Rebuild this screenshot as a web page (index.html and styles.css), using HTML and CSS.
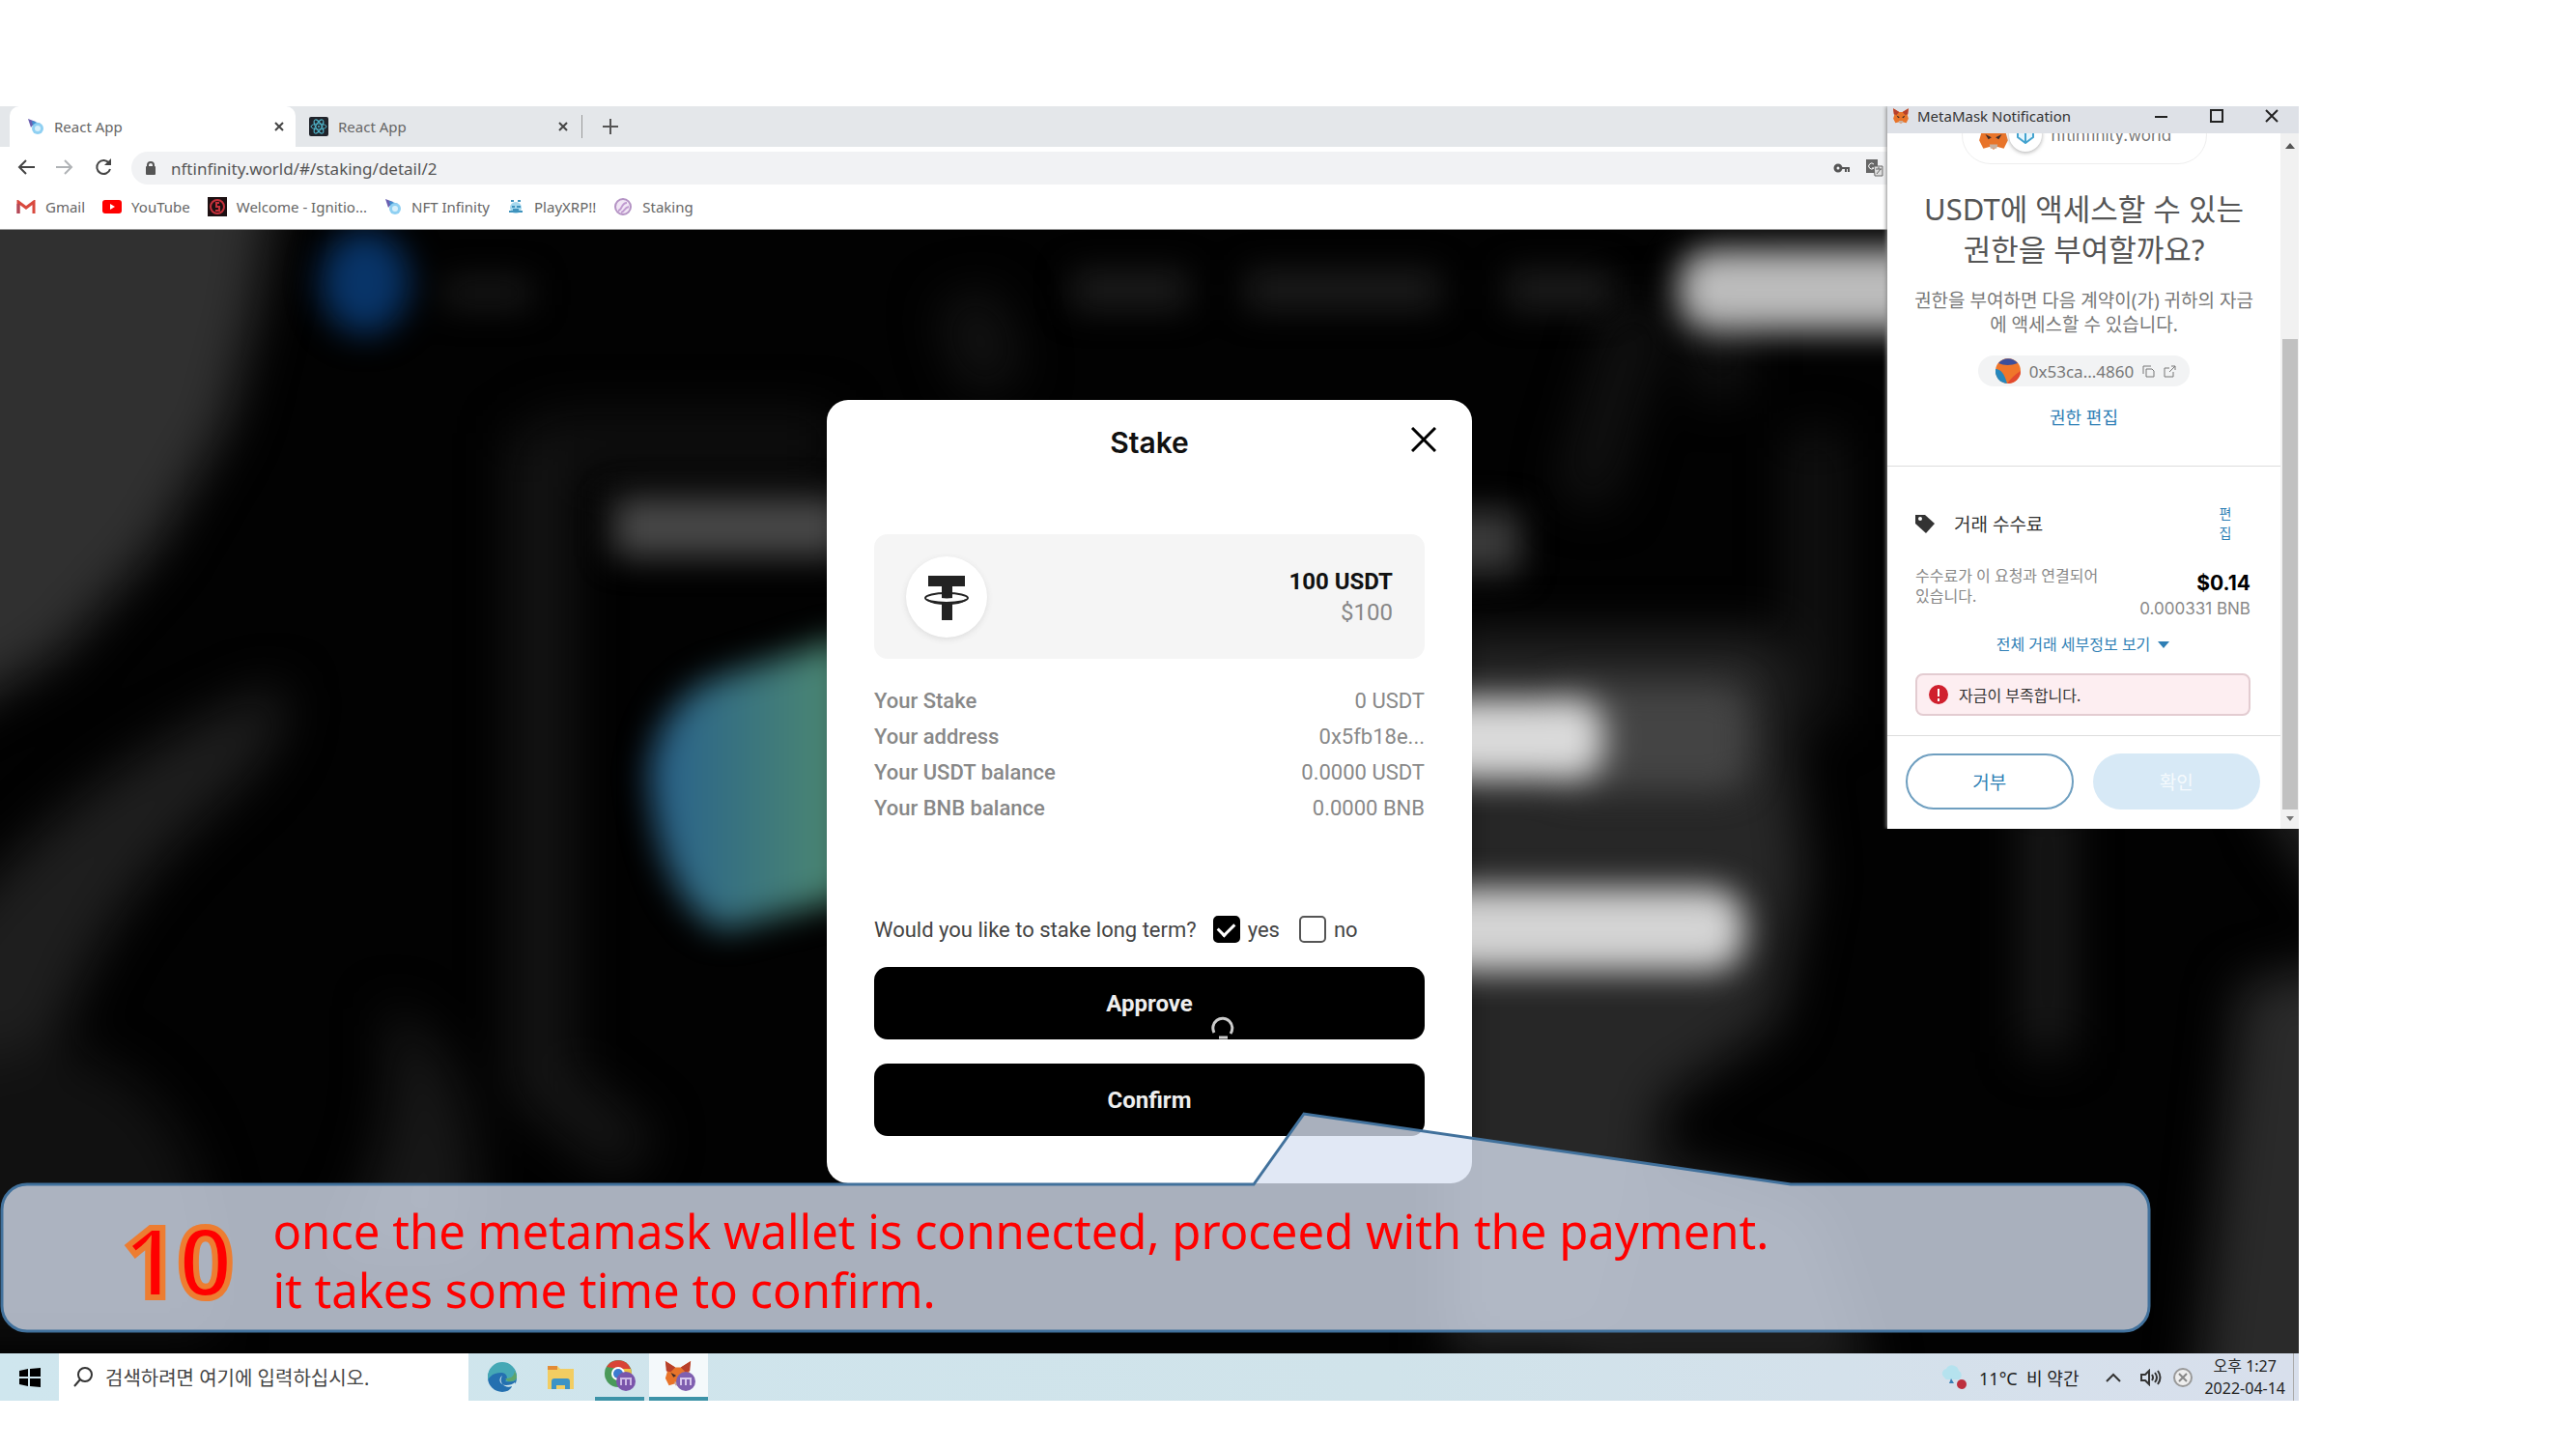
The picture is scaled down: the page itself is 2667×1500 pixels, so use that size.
FILE: index.html
```html
<!DOCTYPE html>
<html lang="en">
<head>
<meta charset="utf-8">
<title>React App</title>
<link rel="stylesheet" href="styles.css">
</head>
<body>
<svg class="defs" aria-hidden="true">
  <symbol id="comet" viewBox="0 0 18 18"><path d="M1 1l8 3-5 6z" fill="#6b5fb0"/><path d="M5 3l9 3-7 8z" fill="#3f8fd0"/><circle cx="11" cy="11" r="6" fill="#8fd0f2"/><circle cx="11" cy="11" r="3" fill="#d8f0fb"/></symbol>
  <symbol id="fox" viewBox="0 0 32 32"><path d="M2 2l11 7h6l11-7-2 12 2 7-4 8-7-2-3 3-3-3-7 2-4-8 2-7z" fill="#e8742a"/><path d="M2 2l11 7-5 5-5-1zM30 2l-11 7 5 5 5-1z" fill="#b8402a"/><path d="M8 15l6 3-3 2zM24 15l-6 3 3 2z" fill="#3a2a2a"/><path d="M12 25h8l-1 4h-6z" fill="#c8b0a0"/></symbol>
</svg>
<main class="screen">
  <header class="browser">
    <div class="tabs">
      <div class="tab tab-active">
        <svg class="fav" width="18" height="18"><use href="#comet"/></svg><span>React App</span>
        <button class="tab-close" aria-label="Close tab"><svg width="10" height="10" viewBox="0 0 10 10"><path d="M1 1l8 8M9 1l-8 8" stroke="#444" stroke-width="2"/></svg></button>
      </div>
      <div class="tab">
        <svg class="fav" width="20" height="20" viewBox="0 0 20 20"><rect width="20" height="20" rx="2" fill="#20242b"/><g fill="none" stroke="#4fb3c8"><ellipse cx="10" cy="10" rx="8" ry="3"/><ellipse cx="10" cy="10" rx="8" ry="3" transform="rotate(60 10 10)"/><ellipse cx="10" cy="10" rx="8" ry="3" transform="rotate(120 10 10)"/></g><circle cx="10" cy="10" r="1" fill="#4fb3c8"/></svg><span>React App</span>
        <button class="tab-close" aria-label="Close tab"><svg width="10" height="10" viewBox="0 0 10 10"><path d="M1 1l8 8M9 1l-8 8" stroke="#444" stroke-width="2"/></svg></button>
      </div>
      <button class="tab-new" aria-label="New tab"><svg width="16" height="16" viewBox="0 0 16 16"><path d="M8 0v16M0 8h16" stroke="#555" stroke-width="2"/></svg></button>
    </div>
    <div class="toolbar">
      <button class="nav" aria-label="Back"><svg width="18" height="18" viewBox="0 0 18 18"><path d="M18 9H2M9 2L2 9l7 7" fill="none" stroke="#444" stroke-width="2"/></svg></button>
      <button class="nav" aria-label="Forward"><svg width="18" height="18" viewBox="0 0 18 18"><path d="M0 9h16M9 2l7 7-7 7" fill="none" stroke="#b0b3b6" stroke-width="2"/></svg></button>
      <button class="nav" aria-label="Reload"><svg width="18" height="18" viewBox="0 0 18 18"><path d="M15 5A7 7 0 1 0 16 11" fill="none" stroke="#444" stroke-width="2"/><path d="M17 0v7h-7z" fill="#444"/></svg></button>
      <div class="address">
        <svg width="10" height="14" viewBox="0 0 10 14"><rect y="5" width="10" height="9" rx="1" fill="#555"/><path d="M2 6V4a3 3 0 0 1 6 0v2" fill="none" stroke="#555" stroke-width="2"/></svg>
        <input class="url" aria-label="Address" value="nftinfinity.world/#/staking/detail/2">
        <svg width="18" height="10" viewBox="0 0 18 10"><path d="M9 5h8M13 5v4M16 5v4" stroke="#555" stroke-width="2"/><circle cx="5" cy="5" r="3" fill="none" stroke="#555" stroke-width="3"/></svg>
        <svg width="18" height="18" viewBox="0 0 18 18"><rect width="12" height="14" fill="#666"/><path d="M8 7h9v10H9z" fill="#ddd" stroke="#666"/><path d="M8 5a3 3 0 1 0 0 4H6" fill="none" stroke="#fff"/><path d="M10 10h6M13 8v2M11 15l4-5" stroke="#666"/></svg>
      </div>
    </div>
    <nav class="bookmarks">
      <a href="#"><svg width="20" height="14" viewBox="0 0 20 14"><path d="M2 14V2l8 6 8-6v12" fill="none" stroke="#d9493e" stroke-width="3"/><path d="M2 14V4" stroke="#b0485a" stroke-width="3"/></svg>Gmail</a>
      <a href="#"><svg width="20" height="14" viewBox="0 0 20 14"><rect width="20" height="14" rx="3" fill="#f00"/><path d="M8 4l5 3-5 3z" fill="#fff"/></svg>YouTube</a>
      <a href="#"><svg width="20" height="20" viewBox="0 0 20 20"><rect width="20" height="20" fill="#1c1012"/><circle cx="10" cy="10" r="7" fill="none" stroke="#c5303a" stroke-width="2"/><path d="M12 6H9v4h3v4H8" fill="none" stroke="#c5303a" stroke-width="2"/></svg>Welcome - Ignitio...</a>
      <a href="#"><svg width="18" height="18"><use href="#comet"/></svg>NFT Infinity</a>
      <a href="#"><svg width="18" height="16" viewBox="0 0 18 16"><circle cx="9" cy="9" r="6" fill="#a5d8ee"/><path d="M4 2h3M11 2h3M2 13h14M5 8h3M10 8h4M6 11h6" stroke="#3f93bd" stroke-width="2"/></svg>PlayXRP!!</a>
      <a href="#"><svg width="20" height="20" viewBox="0 0 20 20"><circle cx="10" cy="10" r="8" fill="#f1e6f5" stroke="#b493c4" stroke-width="2"/><path d="M5 14c4 0 3-8 9-8M8 16c4-1 3-5 8-6" fill="none" stroke="#c09ad0" stroke-width="2"/></svg>Staking</a>
    </nav>
  </header>

  <section class="page">
    <svg class="backdrop" viewBox="0 0 2380 1161" preserveAspectRatio="none" aria-hidden="true">
      <defs>
        <filter id="b1" x="-50%" y="-50%" width="200%" height="200%" color-interpolation-filters="sRGB"><feGaussianBlur stdDeviation="26"/></filter>
        <filter id="b2" x="-50%" y="-80%" width="200%" height="260%" color-interpolation-filters="sRGB"><feGaussianBlur stdDeviation="17"/></filter>
        <linearGradient id="coin" x1="0" y1="0" x2="1" y2="0"><stop offset="0" stop-color="#27608c"/><stop offset="1" stop-color="#4e8a70"/></linearGradient>
      </defs>
      <rect width="2380" height="1161" fill="#020202"/>
      <g filter="url(#b1)">
        <path d="M-80-80H290L265 80 235 200 160 330 60 440-80 520z" fill="#303030"/>
        <path d="M290 470q20 50-60 120-120 100-170 250L-80 960V760Q60 560 290 470z" fill="#1e1e1e"/>
        <path d="M-80 880q180-90 270 60 40 90 30 200H-80z" fill="#111"/>
        <path d="M400 800q110 60 90 260H340q80-120 60-260z" fill="#171717"/>
        <path d="M560 210v670l100 80" fill="none" stroke="#161616" stroke-width="60"/>
        <path d="M560 220h300" stroke="#101010" stroke-width="60"/>
        <path d="M1000 70l30 90" stroke="#141414" stroke-width="60"/>
        <path d="M1780 60v110M1700 80q-40 120-60 200M1880 210v300" stroke="#141414" stroke-width="50" fill="none"/>
        <path d="M1500 420h340l30 250-30 150-120 80-20 260h-200z" fill="#272727"/>
        <path d="M1700 950l180 60 60 180h-300z" fill="#1e1e1e"/>
        <path d="M2290 150l170-40v640l-100-130-70-170z" fill="#262626"/>
        <path d="M2120 580v270" stroke="#252525" stroke-width="36" fill="none"/>
        <path d="M2320 780l140-30v490h-190z" fill="#2a2a2a"/>
      </g>
      <g filter="url(#b2)">
        <ellipse cx="378" cy="54" rx="46" ry="54" fill="#083468"/>
        <rect x="460" y="50" width="90" height="30" fill="#181818"/>
        <path d="M1110 62h120M1290 62h200M1560 62h110" stroke="#1c1c1c" stroke-width="40"/>
        <rect x="1738" y="20" width="300" height="84" rx="34" fill="#bcbcbc"/>
        <rect x="635" y="276" width="240" height="62" fill="#484848"/>
        <rect x="1480" y="290" width="94" height="65" fill="#3a3a3a"/>
        <path d="M672 560q10-70 66-96l140-44v270l-130 34q-66-30-76-164z" fill="url(#coin)"/>
        <rect x="1600" y="470" width="210" height="110" rx="30" fill="#444"/>
        <rect x="1400" y="484" width="260" height="84" rx="30" fill="#dadada"/>
        <rect x="1400" y="680" width="406" height="86" rx="34" fill="#d4d4d4"/>
      </g>
    </svg>

    <form class="modal">
      <header class="modal-head">
        <h2>Stake</h2>
        <button type="button" class="modal-close" aria-label="Close"><svg width="26" height="26" viewBox="0 0 26 26"><path d="M1 1l24 24M25 1L1 25" stroke="#000" stroke-width="3"/></svg></button>
      </header>
      <div class="amount">
        <span class="coin"><svg width="48" height="48" viewBox="0 0 48 48"><path d="M5 2h38v11H30v8H19v-8H5z" fill="#222"/><path d="M19 30h11v18H19z" fill="#222"/><path d="M19 20v7h11v-7" fill="#222"/><ellipse cx="24" cy="25" rx="22" ry="5" fill="none" stroke="#222" stroke-width="2"/><path d="M4 27q6 4 20 4t20-4" fill="none" stroke="#222" stroke-width="2"/><path d="M18 26q6 1 13 0" stroke="#fff" stroke-width="2" fill="none"/></svg></span>
        <div class="amount-text"><strong>100 USDT</strong><span>$100</span></div>
      </div>
      <dl class="facts">
        <div><dt>Your Stake</dt><dd>0 USDT</dd></div>
        <div><dt>Your address</dt><dd>0x5fb18e...</dd></div>
        <div><dt>Your USDT balance</dt><dd>0.0000 USDT</dd></div>
        <div><dt>Your BNB balance</dt><dd>0.0000 BNB</dd></div>
      </dl>
      <div class="term">
        <span>Would you like to stake long term?</span>
        <label><input type="checkbox" checked>yes</label>
        <label><input type="checkbox">no</label>
      </div>
      <button type="button" class="action">Approve<svg class="spinner" width="24" height="24" viewBox="0 0 24 24"><path d="M3 17A10 10 0 1 1 20 18M8 22h9" fill="none" stroke="#ccc" stroke-width="3"/></svg></button>
      <button type="button" class="action">Confirm</button>
    </form>
  </section>

  <footer class="taskbar">
    <button class="start" aria-label="Start"><svg width="22" height="20" viewBox="0 0 22 20"><path d="M0 3l9-2v8H0zM11 1l11-1v9H11zM0 11h9v8l-9-2zM11 11h11v9l-11-1z" fill="#000"/></svg></button>
    <label class="search"><svg width="22" height="22" viewBox="0 0 22 22"><circle cx="13" cy="8" r="7" fill="none" stroke="#333" stroke-width="2"/><path d="M8 13l-6 7" stroke="#333" stroke-width="2"/></svg><input aria-label="검색" value="검색하려면 여기에 입력하십시오."></label>
    <div class="apps">
    <button class="app" aria-label="Edge"><svg width="32" height="32" viewBox="0 0 32 32"><circle cx="16" cy="16" r="15" fill="#2470b0"/><path d="M1 15A15 15 0 0 1 31 15c0 5-5 6-12 5 4-4 1-9-4-9C8 11 3 14 1 19z" fill="#45a8b5"/><path d="M22 20c5 0 9-1 9-5l-2-6c-1 7-5 8-10 8z" fill="#5fa56a"/><path d="M16 14c-5 4-2 10 4 10 4 0 7-1 9-3l1 2c-2 4-5 6-8 7 2-2 4-4 4-5-6 3-15-3-10-11z" fill="#d3e8ee"/></svg></button>
    <button class="app" aria-label="File Explorer"><svg width="32" height="26" viewBox="0 0 32 26"><path d="M2 1h10l3 3h14v21H2z" fill="#f2cd62"/><path d="M2 1h10v4H2z" fill="#e38b35"/><path d="M6 25v-8q0-3 3-3h13q3 0 3 3v8h-5v-4h-9v4z" fill="#3c93c6"/></svg></button>
    <button class="app app-open" aria-label="Chrome"><svg width="34" height="34" viewBox="0 0 34 34"><circle cx="15" cy="15" r="14" fill="#4a9a5a"/><path d="M3 8a14 14 0 0 1 25 2H15z" fill="#d94436"/><path d="M28 10a14 14 0 0 1-13 19l6-12-2-7z" fill="#efc144"/><circle cx="15" cy="15" r="7" fill="#fff"/><circle cx="15" cy="15" r="5" fill="#3c7bd0"/><circle cx="23" cy="23" r="10" fill="#7a55ab"/><path d="M18 27v-7h5v7v-7h5v7" fill="none" stroke="#cdb9e5" stroke-width="2"/></svg></button>
    <button class="app app-open app-current" aria-label="MetaMask"><svg width="34" height="34" viewBox="0 0 34 34"><use href="#fox" width="32" height="30"/><circle cx="24" cy="23" r="10" fill="#8060b0"/><path d="M19 27v-7h5v7v-7h5v7" fill="none" stroke="#d8c8ec" stroke-width="2"/></svg></button>
    </div>
    <div class="tray">
      <svg width="28" height="26" viewBox="0 0 28 26"><path d="M4 13a5 5 0 0 1 2-9 7 7 0 0 1 13 2 5 5 0 0 1 0 9H6z" fill="#b5e2ee"/><path d="M11 14l3 5h-5z" fill="#3a7fb5"/><circle cx="22" cy="20" r="5" fill="#bd2f3e"/></svg>
      <span class="weather">11°C&nbsp; 비 약간</span>
      <svg class="caret" width="16" height="10" viewBox="0 0 16 10"><path d="M1 9l7-7 7 7" fill="none" stroke="#333" stroke-width="2"/></svg>
      <svg width="22" height="18" viewBox="0 0 22 18"><path d="M1 6h4l4-4v14l-4-4H1zM12 6q2 3 0 6M15 4q4 5 0 10M18 2q5 7 0 14" fill="none" stroke="#333" stroke-width="2"/></svg>
      <svg width="20" height="20" viewBox="0 0 20 20"><circle cx="10" cy="10" r="9" fill="#eee" stroke="#999" stroke-width="2"/><path d="M6 6l8 8M14 6l-8 8" stroke="#888" stroke-width="2"/></svg>
      <time class="clock"><span>오후 1:27</span><span>2022-04-14</span></time>
    </div>
  </footer>

  <aside class="wallet">
    <header class="wallet-bar">
      <svg width="20" height="18"><use href="#fox"/></svg><span>MetaMask Notification</span>
      <button aria-label="Minimize"><svg width="14" height="14" viewBox="0 0 14 14"><path d="M0 8h13" stroke="#222" stroke-width="2"/></svg></button>
      <button aria-label="Maximize"><svg width="14" height="14" viewBox="0 0 14 14"><rect x="1" y="1" width="12" height="12" fill="none" stroke="#222" stroke-width="2"/></svg></button>
      <button aria-label="Close"><svg width="14" height="14" viewBox="0 0 14 14"><path d="M1 1l12 12M13 1L1 13" stroke="#222" stroke-width="2"/></svg></button>
    </header>
    <div class="wallet-main">
      <div class="wallet-body">
        <div class="site"><div class="site-pill"><svg width="40" height="34" viewBox="0 0 40 34"><use href="#fox" width="40" height="34"/></svg><span class="site-logo"><svg width="18" height="18" viewBox="0 0 18 18"><path d="M1 2l8 4 8-4v9l-8 6-8-6zM9 6v11" fill="#e5f5fc" stroke="#43a3cf" stroke-width="2"/></svg></span><span class="site-name">nftinfinity.world</span></div></div>
        <h1>USDT에 액세스할 수 있는<br>권한을 부여할까요?</h1>
        <p class="lead">권한을 부여하면 다음 계약이(가) 귀하의 자금<br>에 액세스할 수 있습니다.</p>
        <div class="contract"><svg width="26" height="26" viewBox="0 0 26 26"><circle cx="13" cy="13" r="13" fill="#f0762b"/><path d="M3 5a13 13 0 0 1 20 0q-11 4-20 0z" fill="#3c4f9c"/><path d="M0 11q8 0 12 15a13 13 0 0 1-12-15z" fill="#2687bd"/><path d="M12 26q6-8 14-13a13 13 0 0 1-14 13z" fill="#e2492f"/></svg><span>0x53ca...4860</span>
          <svg width="13" height="13" viewBox="0 0 13 13"><path d="M1 9V1h8M4 4h6l2 2v6H4z" fill="none" stroke="#777"/></svg>
          <svg width="13" height="13" viewBox="0 0 13 13"><path d="M6 3H1v9h9V7M8 1h4v4M12 1L6 7" fill="none" stroke="#777"/></svg></div>
        <a class="edit" href="#">권한 편집</a>
        <section class="fee">
          <div class="fee-head"><svg width="20" height="20" viewBox="0 0 20 20"><path d="M0 1h10l10 9-9 10L0 10z" fill="#333"/><circle cx="5" cy="5" r="2" fill="#fff"/></svg><h3>거래 수수료</h3><a href="#">편집</a></div>
          <div class="fee-row"><p>수수료가 이 요청과 연결되어 있습니다.</p><div class="fee-sum"><strong>$0.14</strong><span>0.000331 BNB</span></div></div>
          <a class="details" href="#">전체 거래 세부정보 보기<svg width="12" height="8" viewBox="0 0 12 8"><path d="M0 1h12L6 8z" fill="#2f7fb5"/></svg></a>
          <div class="alert"><svg width="20" height="20" viewBox="0 0 20 20"><circle cx="10" cy="10" r="10" fill="#d0202e"/><path d="M10 4v8M10 14v3" stroke="#fff" stroke-width="2"/></svg>자금이 부족합니다.</div>
        </section>
        <div class="wallet-actions"><button class="reject">거부</button><button class="accept">확인</button></div>
      </div>
      <div class="scrollbar" aria-hidden="true"><svg width="10" height="6" viewBox="0 0 10 6"><path d="M0 6l5-6 5 6z" fill="#555"/></svg><i class="thumb"></i><svg width="8" height="5" viewBox="0 0 8 5"><path d="M0 0l4 5 4-5z" fill="#777"/></svg></div>
    </div>
  </aside>

  <aside class="callout">
    <svg class="callout-shape" viewBox="0 0 2228 230" aria-hidden="true"><path d="M28 75H1298L1350 2 1854 75H2199A26 26 0 0 1 2225 101V201A26 26 0 0 1 2199 227H28A26 26 0 0 1 2 201V101A26 26 0 0 1 28 75z"/></svg>
    <span class="step">10</span>
    <p>once the metamask wallet is connected, proceed with the payment.<br>it takes some time to confirm.</p>
  </aside>
</main>
</body>
</html>
```

FILE: styles.css
```css
* { box-sizing: border-box; }
body { margin: 0; background: #fff; color: #444; font-family: "Noto Sans", "Noto Sans CJK KR", sans-serif; font-size: 16px; }
h1, h2, h3, p, dl, dd { margin: 0; font-weight: 400; }
button { padding: 0; border: 0; background: none; font: inherit; color: inherit; display: grid; place-items: center; }
input { border: 0; background: none; font: inherit; color: inherit; padding: 0; min-width: 0; }
a { color: inherit; text-decoration: none; }
.defs { position: absolute; width: 0; height: 0; }

.screen { position: relative; margin: 110px 287px 0 0; }

/* browser chrome */
.tabs { display: flex; height: 42px; padding-left: 10px; background: #e4e7ea; font-size: 15px; }
.tab { display: flex; align-items: center; gap: 10px; width: 296px; padding: 0 12px 0 18px; color: #666; }
.tab + .tab { padding: 0 14px; }
.tab-active { background: #fff; border-radius: 10px 10px 0 0; }
.tab-close { margin-left: auto; }
.tab-new { width: 58px; height: 24px; align-self: center; border-left: 1px solid #999; }
.toolbar { display: flex; align-items: center; height: 42px; padding-left: 16px; background: #fff; }
.nav { width: 22px; margin-right: 18px; }
.address { display: flex; align-items: center; gap: 16px; flex: 1; height: 34px; margin-top: 2px; padding: 0 430px 0 15px; border-radius: 17px; background: #f1f2f4; }
.url { flex: 1; color: #555; font-size: 17px; }
.bookmarks { display: flex; align-items: center; gap: 18px; height: 44px; padding: 0 0 4px 17px; background: #fff; border-bottom: 1px solid #999; font-size: 15px; }
.bookmarks a { display: flex; align-items: center; gap: 10px; color: #666; }

/* staking page behind the dialog */
.page { position: relative; display: flex; justify-content: center; padding: 176px 0; background: #000; overflow: hidden; }
.backdrop { position: absolute; inset: 0; width: 100%; height: 100%; }
.modal { position: relative; width: 668px; padding: 0 49px 49px; border-radius: 22px; background: #fff; font-family: Roboto, sans-serif; font-size: 22px; }
.modal-head { position: relative; padding: 22px 0; margin-bottom: 51px; text-align: center; color: #111; }
.modal-head h2 { font: 600 30px/44px Inter, sans-serif; }
.modal-close { position: absolute; right: -12px; top: 28px; }
.amount { display: flex; align-items: center; justify-content: space-between; height: 129px; padding: 0 33px; border-radius: 14px; background: #f5f5f5; }
.coin { display: grid; place-items: center; width: 84px; height: 84px; border-radius: 50%; background: #fff; box-shadow: 0 2px 6px #ddd; }
.amount-text { display: grid; text-align: right; font-size: 24px; line-height: 32px; color: #888; }
.amount-text strong { color: #111; }
.facts { margin-top: 25px; color: #888; font-weight: 500; }
.facts div { display: flex; justify-content: space-between; line-height: 37px; }
.term { display: flex; align-items: center; margin: 93px 0 25px; height: 28px; color: #444; }
.term label { display: flex; align-items: center; gap: 8px; margin-left: 17px; }
.term label + label { margin-left: 20px; }
.term input { appearance: none; width: 28px; height: 28px; margin: 0; border: 2px solid #555; border-radius: 5px; background: #fff; }
.term input:checked { display: grid; place-items: center; border-color: #000; background: #000; }
.term input:checked::after { content: ""; width: 8px; height: 14px; margin-bottom: 4px; border: solid #fff; border-width: 0 3px 3px 0; transform: rotate(45deg); }
.action { position: relative; width: 100%; height: 75px; border-radius: 14px; background: #000; color: #eee; font-weight: 700; font-size: 24px; }
.action + .action { margin-top: 25px; }
.spinner { position: absolute; left: 349px; bottom: 0; }

/* taskbar */
.taskbar { display: flex; height: 49px; background: linear-gradient(90deg, #cfe6ee, #d0e3ea 60%, #d8dfec); color: #222; }
.start { width: 61px; }
.search { display: flex; align-items: center; gap: 12px; width: 424px; padding: 0 14px; background: #fff; color: #444; font-size: 20px; }
.search input { flex: 1; }
.apps { display: flex; padding-left: 4px; }
.app { width: 61px; }
.app-open { width: 51px; margin: 0 5px; border-bottom: 4px solid #3d93a8; }
.app-current { width: 61px; margin: 0; background: #f4f9fb; }
.tray { display: flex; align-items: center; gap: 12px; margin-left: auto; margin-right: 5px; padding-right: 8px; border-right: 1px solid #aaa; }
.weather { font-size: 18px; }
.caret { margin: 0 8px 0 16px; }
.clock { display: grid; line-height: 23px; text-align: center; }

/* wallet popup */
.wallet { position: absolute; top: 0; right: 0; width: 426px; background: #fff; box-shadow: -1px 0 4px #888; clip-path: inset(0 0 0 -6px); }
.wallet-bar { display: flex; align-items: center; height: 28px; padding: 0 21px 8px 4px; background: #dee1e7; color: #333; font-size: 15px; }
.wallet-bar span { flex: 1; padding-left: 7px; }
.wallet-bar button { margin-left: 43px; }
.wallet-bar button:first-of-type { margin-left: 0; }
.wallet-main { display: flex; }
.wallet-body { flex: 1; display: flex; flex-direction: column; text-align: center; }
.site { height: 32px; display: flex; justify-content: center; align-items: flex-end; overflow: hidden; }
.site-pill { display: flex; flex: none; align-items: center; width: 254px; height: 60px; padding: 0 12px; border: 1px solid #eee; border-radius: 30px; color: #777; }
.site-logo { display: grid; place-items: center; width: 34px; height: 34px; margin: 0 10px 0 -4px; border-radius: 50%; background: #fff; box-shadow: 0 1px 4px #aaa; }
.site-name { font: 17px/24px Inter, sans-serif; }
h1 { margin-top: 25px; font-size: 31px; line-height: 42px; color: #555; }
.lead { margin-top: 20px; font-size: 19px; line-height: 25px; color: #777; }
.contract { display: flex; align-items: center; align-self: center; gap: 9px; height: 32px; margin-top: 19px; padding: 0 14px 0 18px; border-radius: 16px; background: #f2f3f4; color: #777; font-size: 17px; }
.edit { margin-top: 19px; line-height: 26px; font-size: 18px; color: #2f7fb5; }
.fee { margin-top: 37px; padding: 31px 31px 20px 29px; border: solid #ddd; border-width: 1px 0; }
.fee-head { display: flex; align-items: center; height: 56px; color: #333; }
.fee-head h3 { flex: 1; padding-left: 20px; text-align: left; font-size: 19px; }
.fee-head a { width: 16px; margin-right: 18px; font-size: 14px; line-height: 20px; color: #2f7fb5; }
.fee-row { display: flex; justify-content: space-between; margin-top: 14px; text-align: left; color: #888; }
.fee-row p { width: 200px; padding-top: 2px; font-size: 16px; line-height: 21px; word-break: keep-all; }
.fee-sum { display: grid; padding-top: 6px; text-align: right; line-height: 27px; font-size: 17px; font-family: Inter, sans-serif; }
.fee-sum strong { color: #000; font-size: 21px; }
.details { display: flex; align-items: center; justify-content: center; gap: 8px; margin: 11px 0 18px; line-height: 24px; font-size: 16px; color: #2f7fb5; }
.alert { display: flex; align-items: center; gap: 11px; height: 44px; padding: 0 12px; border: 2px solid #e3ccd1; border-radius: 8px; background: #fdeef1; color: #333; font-size: 16px; }
.wallet-actions { display: grid; grid-template-columns: 1fr 1fr; gap: 20px; padding: 18px 21px 20px 19px; }
.wallet-actions button { height: 58px; border-radius: 29px; font-size: 19px; }
.reject { border: 2px solid #6f9fc0; color: #2f7fb5; }
.accept { background: #d7e9f6; color: #f5fafd; }
.scrollbar { display: flex; flex-direction: column; align-items: center; width: 19px; padding: 10px 0 8px; background: #f1f1f1; }
.thumb { width: 16px; height: 487px; margin: auto 0 7px; background: #c1c1c1; }

/* instruction callout */
.callout { position: absolute; left: 0; bottom: 69px; display: flex; align-items: center; gap: 41px; width: 2228px; height: 155px; padding-left: 127px; color: #f00; }
.callout-shape { position: absolute; left: 0; bottom: 0; width: 100%; fill: #d9e2f2; fill-opacity: .78; stroke: #41719c; stroke-width: 3; }
.step { position: relative; font-size: 100px; line-height: 100px; font-weight: 700; -webkit-text-stroke: 6px #ed7d31; }
.callout p { position: relative; padding-top: 2px; font-size: 49px; line-height: 61px; white-space: nowrap; }
```
